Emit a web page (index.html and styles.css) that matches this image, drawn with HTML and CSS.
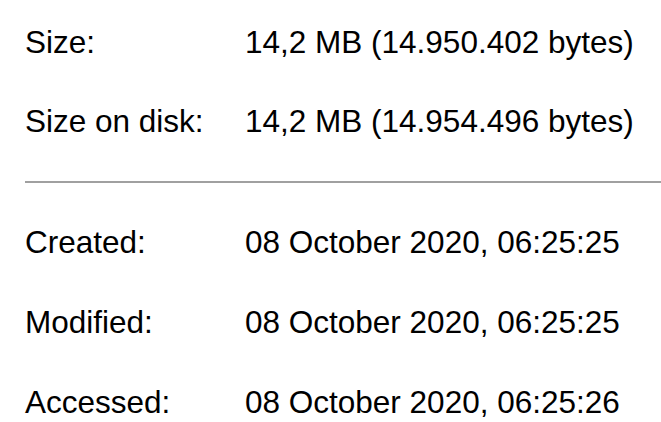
FILE: index.html
```html
<!DOCTYPE html>
<html>
<head>
<meta charset="utf-8">
<link rel="stylesheet" href="styles.css">
</head>
<body>
<div class="props">
  <div class="grid">
    <div class="label">Size:</div><div class="value">14,2 MB (14.950.402 bytes)</div>
    <div class="label">Size on disk:</div><div class="value">14,2 MB (14.954.496 bytes)</div>
  </div>
  <div class="sep"></div>
  <div class="grid lower">
    <div class="label">Created:</div><div class="value">08 October 2020, 06:25:25</div>
    <div class="label">Modified:</div><div class="value">08 October 2020, 06:25:25</div>
    <div class="label">Accessed:</div><div class="value">08 October 2020, 06:25:26</div>
  </div>
</div>
</body>
</html>
```
FILE: styles.css
```css
html, body {
  margin: 0;
  padding: 0;
  background: #ffffff;
}
.props {
  padding: 3px 0 0 25px;
  font-family: "Liberation Sans", Arial, sans-serif;
  font-size: 31.5px;
  color: #000;
}
.grid {
  display: grid;
  grid-template-columns: 220px auto;
  grid-auto-rows: 79px;
  align-items: center;
  line-height: 79px;
  white-space: nowrap;
}
.grid.lower {
  grid-auto-rows: 80px;
  line-height: 80px;
}
.sep {
  height: 2px;
  background: #a0a0a0;
  margin: 20px 0 19px 0;
}
```
